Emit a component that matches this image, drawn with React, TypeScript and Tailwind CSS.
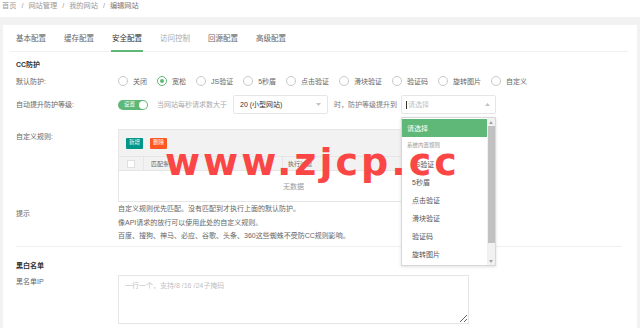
import React from "react";

function Radio({ label, checked }: { label: string; checked?: boolean }) {
  return (
    <div className="flex items-center mr-[10px]">
      <div
        className={
          "w-[10px] h-[10px] rounded-full border flex items-center justify-center bg-white " +
          (checked ? "border-[#5FB878]" : "border-[#c9c9c9]")
        }
      >
        {checked && <div className="w-[4px] h-[4px] rounded-full bg-[#5FB878]" />}
      </div>
      <span className="ml-[5px] text-[#666]">{label}</span>
    </div>
  );
}

export default function App() {
  const tabs = ["基本配置", "缓存配置", "安全配置", "访问控制", "回源配置", "高级配置"];
  const radios = ["关闭", "宽松", "JS验证", "5秒盾", "点击验证", "滑块验证", "验证码", "旋转图片", "自定义"];
  const items = ["JS验证", "5秒盾", "点击验证", "滑块验证", "验证码", "旋转图片"];
  return (
    <div className="relative w-[640px] h-[328px] overflow-hidden bg-[#f2f2f2] font-['Liberation_Sans','Noto_Sans_CJK_SC',sans-serif] text-[7px] leading-none text-[#666]">
      {/* breadcrumb */}
      <div className="h-[17px] bg-white">
        <div className="h-[12px] flex items-center pl-[2px] text-[7.2px] text-[#999]">
          <span>首页</span>
          <span className="mx-[5px]">/</span>
          <span>网站管理</span>
          <span className="mx-[5px]">/</span>
          <span>我的网站</span>
          <span className="mx-[5px]">/</span>
          <span className="text-[#777]">编辑网站</span>
        </div>
      </div>

      {/* card */}
      <div className="mt-[8px] ml-[3px] w-[634px] h-[303px] bg-white">
        {/* tabs */}
        <div className="ml-[7px] mr-[9px] pt-[3px] pl-[5px] flex gap-[16px] border-b border-[#f0f0f0] text-[7.5px]">
          {tabs.map((t, i) => (
            <div
              key={t}
              className={
                "w-[32px] h-[24px] flex items-center justify-center border-b-2 -mb-px " +
                (i === 2
                  ? "border-[#5FB878] text-[#333]"
                  : i === 3
                  ? "border-transparent text-[#aaa]"
                  : "border-transparent text-[#666]")
              }
            >
              {t}
            </div>
          ))}
        </div>

        <div className="pl-[13px] pr-[15px]">
          {/* CC防护 */}
          <div className="mt-[6px] h-[12px] flex items-center font-bold text-[#333]">CC防护</div>

          {/* 默认防护 */}
          <div className="mt-[4px] h-[14px] flex items-center">
            <div className="w-[102px]">默认防护:</div>
            {radios.map((r, i) => (
              <Radio key={r} label={r} checked={i === 1} />
            ))}
          </div>

          {/* 自动提升 */}
          <div className="mt-[7px] h-[19px] flex items-center">
            <div className="w-[102px]">自动提升防护等级:</div>
            <div className="relative w-[30px] h-[10px] rounded-full bg-[#5FB878] flex items-center">
              <span className="ml-[6px] text-[5.5px] text-white">设置</span>
              <div className="absolute right-[1px] top-[1px] w-[8px] h-[8px] rounded-full bg-white" />
            </div>
            <span className="ml-[9px] text-[#aaa]">当网站每秒请求数大于</span>
            <div className="ml-[6px] w-[95px] h-[19px] border border-[#e6e6e6] rounded-[2px] flex items-center justify-between pl-[6px] pr-[6px]">
              <span className="text-[#333]">20 (小型网站)</span>
              <svg width="5" height="3" viewBox="0 0 5 3">
                <path d="M0 0 L5 0 L2.5 3 Z" fill="#c2c2c2" />
              </svg>
            </div>
            <span className="ml-[6px] text-[#777]">时，防护等级提升到</span>
            <div className="relative ml-[4px]">
              <div className="w-[95px] h-[19px] border border-[#e6e6e6] rounded-[2px] flex items-center justify-between pl-[4px] pr-[5px]">
                <span className="flex items-center text-[#c2c2c2]">
                  <span className="w-[1px] h-[8px] bg-[#333] mr-[1px]" />
                  请选择
                </span>
                <svg width="5" height="3" viewBox="0 0 5 3">
                  <path d="M0 3 L5 3 L2.5 0 Z" fill="#c2c2c2" />
                </svg>
              </div>
              {/* dropdown */}
              <div className="absolute left-0 top-[22px] z-10 w-[95px] h-[149px] bg-white border border-[#d8d8d8] shadow-[0_1px_3px_rgba(0,0,0,0.12)] flex">
                <div className="flex-1 pt-[1px]">
                  <div className="h-[18px] bg-[#5FB878] text-white flex items-center pl-[5px]">请选择</div>
                  <div className="h-[18px] flex items-center pl-[5px] text-[5.5px] text-[#999]">系统内置规则</div>
                  {items.map((it) => (
                    <div key={it} className="h-[18px] flex items-center pl-[10px] text-[#555]">
                      {it}
                    </div>
                  ))}
                </div>
                <div className="w-[8px] h-full bg-[#f1f1f1] flex flex-col items-center">
                  <div className="h-[8px] flex items-center justify-center">
                    <svg width="4" height="3" viewBox="0 0 4 3">
                      <path d="M0 3 L4 3 L2 0 Z" fill="#a3a3a3" />
                    </svg>
                  </div>
                  <div className="w-[7px] h-[117px] bg-[#c1c1c1]" />
                  <div className="flex-1" />
                  <div className="h-[8px] flex items-center justify-center">
                    <svg width="4" height="3" viewBox="0 0 4 3">
                      <path d="M0 0 L4 0 L2 3 Z" fill="#a3a3a3" />
                    </svg>
                  </div>
                </div>
              </div>
            </div>
          </div>

          {/* 自定义规则 */}
          <div className="mt-[15px] flex">
            <div className="w-[102px] pt-[4px] leading-[8px]">自定义规则:</div>
            <div className="w-[351px] h-[73px] border border-[#e6e6e6] flex flex-col">
              <div className="h-[26px] bg-[#f2f2f2] flex items-center pl-[7px] gap-[7px]">
                <div className="w-[17px] h-[11px] bg-[#009688] text-white text-[5.5px] flex items-center justify-center rounded-[1px]">新增</div>
                <div className="w-[17px] h-[11px] bg-[#FF5722] text-white text-[5.5px] flex items-center justify-center rounded-[1px]">删除</div>
              </div>
              <div className="h-[15px] bg-[#f2f2f2] border-t border-b border-[#e6e6e6] flex text-[6px] text-[#666]">
                <div className="w-[25px] border-r border-[#e6e6e6] flex items-center justify-center">
                  <div className="w-[8px] h-[8px] bg-white border border-[#e0e0e0]" />
                </div>
                <div className="w-[139px] border-r border-[#e6e6e6] flex items-center pl-[7px]">匹配条件</div>
                <div className="flex-1 flex items-center pl-[5px]">执行过滤</div>
              </div>
              <div className="flex-1 flex items-center justify-center text-[#999]">无数据</div>
            </div>
          </div>

          {/* 提示 */}
          <div className="flex">
            <div className="w-[102px] pt-[5px] leading-[13.5px]">提示</div>
            <div className="leading-[13.5px] text-[#666]">
              <div>自定义规则优先匹配。没有匹配到才执行上面的默认防护。</div>
              <div>像API请求的放行可以使用此处的自定义规则。</div>
              <div>百度、搜狗、神马、必应、谷歌、头条、360这些蜘蛛不受防CC规则影响。</div>
            </div>
          </div>

          <div className="mt-[3px] h-px bg-[#f0f0f0]" />

          {/* 黑白名单 */}
          <div className="mt-[13px] h-[12px] flex items-center font-bold text-[#333]">黑白名单</div>
          <div className="mt-[3px] flex">
            <div className="w-[102px] pt-[1px] leading-[12px]">黑名单IP</div>
            <textarea
              className="w-[351px] h-[49px] border border-[#e6e6e6] pl-[6px] pt-[5px] text-[7px] leading-[10px] outline-none font-['Liberation_Sans','Noto_Sans_CJK_SC',sans-serif] placeholder:text-[#c2c2c2]"
              placeholder="一行一个，支持/8 /16 /24子掩码"
            />
          </div>
        </div>
      </div>

      {/* watermark */}
      <div className="absolute left-[165px] top-[143px] z-20 pointer-events-none font-['DejaVu_Sans',sans-serif] font-bold text-[38px] leading-none tracking-[3px] text-[#fb4646]">
        www.zjcp.cc
      </div>
    </div>
  );
}
